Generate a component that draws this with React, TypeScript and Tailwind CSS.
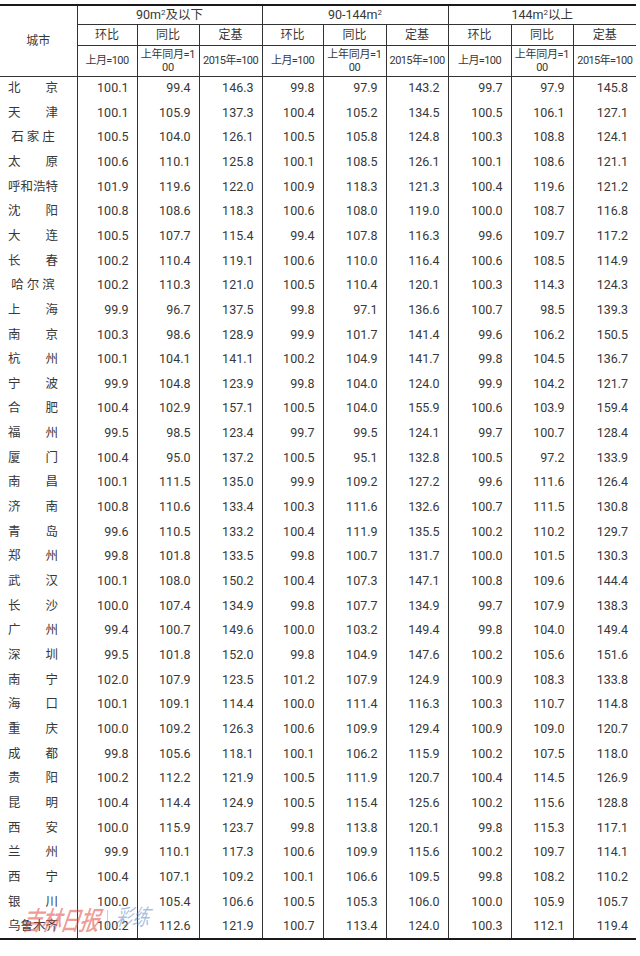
import React from 'react'

const rows: [string, number[]][] = [
  ['北京', [100.1, 99.4, 146.3, 99.8, 97.9, 143.2, 99.7, 97.9, 145.8]],
  ['天津', [100.1, 105.9, 137.3, 100.4, 105.2, 134.5, 100.5, 106.1, 127.1]],
  ['石家庄', [100.5, 104.0, 126.1, 100.5, 105.8, 124.8, 100.3, 108.8, 124.1]],
  ['太原', [100.6, 110.1, 125.8, 100.1, 108.5, 126.1, 100.1, 108.6, 121.1]],
  ['呼和浩特', [101.9, 119.6, 122.0, 100.9, 118.3, 121.3, 100.4, 119.6, 121.2]],
  ['沈阳', [100.8, 108.6, 118.3, 100.6, 108.0, 119.0, 100.0, 108.7, 116.8]],
  ['大连', [100.5, 107.7, 115.4, 99.4, 107.8, 116.3, 99.6, 109.7, 117.2]],
  ['长春', [100.2, 110.4, 119.1, 100.6, 110.0, 116.4, 100.6, 108.5, 114.9]],
  ['哈尔滨', [100.2, 110.3, 121.0, 100.5, 110.4, 120.1, 100.3, 114.3, 124.3]],
  ['上海', [99.9, 96.7, 137.5, 99.8, 97.1, 136.6, 100.7, 98.5, 139.3]],
  ['南京', [100.3, 98.6, 128.9, 99.9, 101.7, 141.4, 99.6, 106.2, 150.5]],
  ['杭州', [100.1, 104.1, 141.1, 100.2, 104.9, 141.7, 99.8, 104.5, 136.7]],
  ['宁波', [99.9, 104.8, 123.9, 99.8, 104.0, 124.0, 99.9, 104.2, 121.7]],
  ['合肥', [100.4, 102.9, 157.1, 100.5, 104.0, 155.9, 100.6, 103.9, 159.4]],
  ['福州', [99.5, 98.5, 123.4, 99.7, 99.5, 124.1, 99.7, 100.7, 128.4]],
  ['厦门', [100.4, 95.0, 137.2, 100.5, 95.1, 132.8, 100.5, 97.2, 133.9]],
  ['南昌', [100.1, 111.5, 135.0, 99.9, 109.2, 127.2, 99.6, 111.6, 126.4]],
  ['济南', [100.8, 110.6, 133.4, 100.3, 111.6, 132.6, 100.7, 111.5, 130.8]],
  ['青岛', [99.6, 110.5, 133.2, 100.4, 111.9, 135.5, 100.2, 110.2, 129.7]],
  ['郑州', [99.8, 101.8, 133.5, 99.8, 100.7, 131.7, 100.0, 101.5, 130.3]],
  ['武汉', [100.1, 108.0, 150.2, 100.4, 107.3, 147.1, 100.8, 109.6, 144.4]],
  ['长沙', [100.0, 107.4, 134.9, 99.8, 107.7, 134.9, 99.7, 107.9, 138.3]],
  ['广州', [99.4, 100.7, 149.6, 100.0, 103.2, 149.4, 99.8, 104.0, 149.4]],
  ['深圳', [99.5, 101.8, 152.0, 99.8, 104.9, 147.6, 100.2, 105.6, 151.6]],
  ['南宁', [102.0, 107.9, 123.5, 101.2, 107.9, 124.9, 100.9, 108.3, 133.8]],
  ['海口', [100.1, 109.1, 114.4, 100.0, 111.4, 116.3, 100.3, 110.7, 114.8]],
  ['重庆', [100.0, 109.2, 126.3, 100.6, 109.9, 129.4, 100.9, 109.0, 120.7]],
  ['成都', [99.8, 105.6, 118.1, 100.1, 106.2, 115.9, 100.2, 107.5, 118.0]],
  ['贵阳', [100.2, 112.2, 121.9, 100.5, 111.9, 120.7, 100.4, 114.5, 126.9]],
  ['昆明', [100.4, 114.4, 124.9, 100.5, 115.4, 125.6, 100.2, 115.6, 128.8]],
  ['西安', [100.0, 115.9, 123.7, 99.8, 113.8, 120.1, 99.8, 115.3, 117.1]],
  ['兰州', [99.9, 110.1, 117.3, 100.6, 109.9, 115.6, 100.2, 109.7, 114.1]],
  ['西宁', [100.4, 107.1, 109.2, 100.1, 106.6, 109.5, 99.8, 108.2, 110.2]],
  ['银川', [100.0, 105.4, 106.6, 100.5, 105.3, 106.0, 100.0, 105.9, 105.7]],
  ['乌鲁木齐', [100.2, 112.6, 121.9, 100.7, 113.4, 124.0, 100.3, 112.1, 119.4]],
]

const colWidths = ['w-[77px]', 'w-[60px]', 'w-[62px]', 'w-[63px]', 'w-[61px]', 'w-[63px]', 'w-[62px]', 'w-[63px]', 'w-[62px]', 'w-[63px]']

function CityName({ name }: { name: string }) {
  const chars = name.split('')
  return (
    <div className={`ml-2 w-[50px] flex ${chars.length === 3 ? 'justify-center gap-[3px]' : 'justify-between'}`}>
      {chars.map((c, i) => (
        <span key={i}>{c}</span>
      ))}
    </div>
  )
}

function Group({ label, last }: { label: React.ReactNode; last?: boolean }) {
  return (
    <th
      colSpan={3}
      className={`border-t-2 border-t-[#1a1a1a] border-b border-b-[#333] font-normal text-[12.5px] leading-none h-[19px] ${last ? '' : 'border-r border-r-[#333]'}`}
    >
      {label}
    </th>
  )
}

export default function App() {
  const sub = ['环比', '同比', '定基', '环比', '同比', '定基', '环比', '同比', '定基']
  return (
    <div className="relative bg-white w-[640px] h-[956px] pt-1 text-[#383838]" style={{ fontFamily: 'Roboto, "Noto Sans CJK SC", sans-serif' }}>
      <table className="table-fixed border-collapse w-[636px]">
        <colgroup>
          {colWidths.map((w, i) => (
            <col key={i} className={w} />
          ))}
        </colgroup>
        <thead>
          <tr>
            <th rowSpan={3} className="border-t-2 border-t-[#1a1a1a] border-r border-r-[#333] border-b border-b-[#333] font-normal text-[12px]">
              城市
            </th>
            <Group label={<>90m<sup className="text-[8px]">2</sup>及以下</>} />
            <Group label={<>90-144m<sup className="text-[8px]">2</sup></>} />
            <Group label={<>144m<sup className="text-[8px]">2</sup>以上</>} last />
          </tr>
          <tr>
            {sub.map((s, i) => (
              <th key={i} className={`h-[21px] border-b border-b-[#333] font-normal text-[12px] leading-none ${i < 8 ? 'border-r border-r-[#333]' : ''}`}>
                {s}
              </th>
            ))}
          </tr>
          <tr>
            {[0, 1, 2].map((g) => (
              <React.Fragment key={g}>
                <th className="h-[31px] border-b border-b-[#333] border-r border-r-[#333] font-normal text-[11px] tracking-[-0.6px] leading-none">上月=100</th>
                <th className="h-[31px] border-b border-b-[#333] border-r border-r-[#333] font-normal text-[11px] tracking-[-0.3px] leading-[13px]">
                  上年同月=1
                  <br />
                  00
                </th>
                <th className={`h-[31px] border-b border-b-[#333] font-normal text-[11px] tracking-[-0.6px] leading-none ${g < 2 ? 'border-r border-r-[#333]' : ''}`}>
                  2015年=100
                </th>
              </React.Fragment>
            ))}
          </tr>
        </thead>
        <tbody>
          {rows.map(([city, vals], r) => {
            const last = r === rows.length - 1
            return (
              <tr key={city} className="h-[24.66px]">
                <td className={`text-[12.5px] border-r border-r-[#333] ${last ? 'border-b-2 border-b-[#1a1a1a]' : ''}`}>
                  <CityName name={city} />
                </td>
                {vals.map((v, i) => (
                  <td
                    key={i}
                    className={`text-right pr-2 text-[12.5px] ${i < 8 ? 'border-r border-r-[#333]' : ''} ${last ? 'border-b-2 border-b-[#1a1a1a]' : ''}`}
                  >
                    {v.toFixed(1)}
                  </td>
                ))}
              </tr>
            )
          })}
        </tbody>
      </table>

      {/* watermark */}
      <div className="absolute left-[23px] top-[905px] flex items-center gap-[8px] pointer-events-none">
        <span
          className="text-[20px] italic font-medium text-[#e0463c]/55 tracking-[-1px] -skew-x-12 scale-y-[1.3] origin-center"
          style={{ fontFamily: '"Noto Sans CJK SC", sans-serif' }}
        >
          吉林日报
        </span>
        <span className="w-px h-[20px] bg-[#aaa]/60" />
        <span
          className="text-[17px] italic text-[#5a86c4]/55 -skew-x-12 scale-y-[1.3] -mt-2"
          style={{ fontFamily: '"Noto Sans CJK SC", sans-serif' }}
        >
          彩练
        </span>
      </div>
    </div>
  )
}
